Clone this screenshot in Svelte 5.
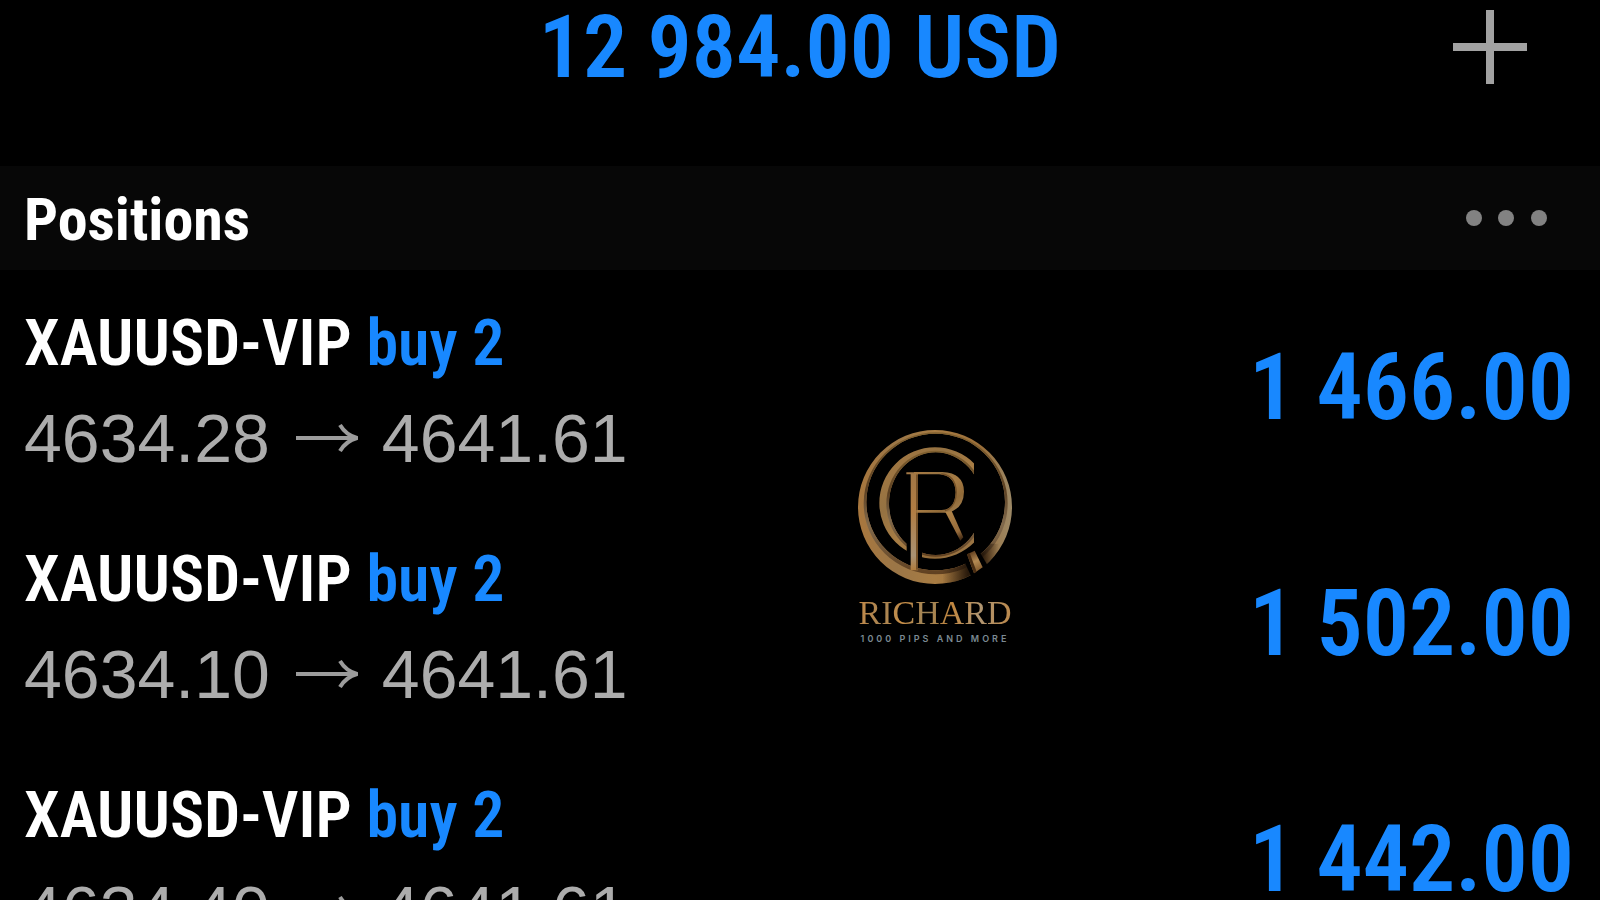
<script>
  const positions = [
    { symbol: 'XAUUSD-VIP', side: 'buy 2', open: '4634.28', current: '4641.61', profit: '1 466.00' },
    { symbol: 'XAUUSD-VIP', side: 'buy 2', open: '4634.10', current: '4641.61', profit: '1 502.00' },
    { symbol: 'XAUUSD-VIP', side: 'buy 2', open: '4634.40', current: '4641.61', profit: '1 442.00' }
  ];
</script>

<main class="screen">
  <header class="top">
    <h1>12 984.00 USD</h1>
    <button class="add" aria-label="New order">
      <svg width="76" height="76" viewBox="0 0 76 76">
        <path d="M38 1V75M1 38H75" fill="none" stroke="#a2a2a2" stroke-width="8" />
      </svg>
    </button>
  </header>

  <section class="positions">
    <div class="bar">
      <h2>Positions</h2>
      <button class="more" aria-label="Position options">
        <svg width="84" height="20" viewBox="0 0 84 20" fill="#828282">
          <circle cx="10" cy="10" r="8" />
          <circle cx="42" cy="10" r="8" />
          <circle cx="75" cy="10" r="8" />
        </svg>
      </button>
    </div>
    <ul>
      {#each positions as p}
        <li>
          <div class="detail">
            <div class="name">{p.symbol} <span>{p.side}</span></div>
            <div class="prices">
              {p.open}
              <svg width="64" height="28" viewBox="0 0 64 28" fill="none" stroke="#9c9c9c" stroke-width="4">
                <path d="M2 14H62M46 1Q52 11 63 14Q52 17 46 27" />
              </svg>
              {p.current}
            </div>
          </div>
          <div class="profit">{p.profit}</div>
        </li>
      {/each}
    </ul>
  </section>

  <aside class="brand">
    <svg width="156" height="156" viewBox="54 56 468 468" aria-hidden="true">
      <defs>
        <linearGradient id="gold" x1="0" y1="0" x2="1" y2="1">
          <stop offset="0" stop-color="#a87a42" />
          <stop offset=".3" stop-color="#957242" />
          <stop offset=".5" stop-color="#a87d45" />
          <stop offset=".75" stop-color="#916a38" />
          <stop offset="1" stop-color="#a98656" />
        </linearGradient>
        <linearGradient id="ring" gradientUnits="userSpaceOnUse" x1="57" y1="290" x2="519" y2="290">
          <stop offset="0" stop-color="#a8773e" />
          <stop offset=".25" stop-color="#9b7647" />
          <stop offset=".5" stop-color="#a87c43" />
          <stop offset=".8" stop-color="#9a6e39" />
          <stop offset="1" stop-color="#9c8967" />
        </linearGradient>
        <linearGradient id="shade" gradientUnits="userSpaceOnUse" x1="310" y1="0" x2="480" y2="0">
          <stop offset="0" stop-color="#1c1006" stop-opacity="0" />
          <stop offset=".45" stop-color="#1c1006" stop-opacity=".9" />
          <stop offset=".7" stop-color="#1c1006" stop-opacity=".9" />
          <stop offset="1" stop-color="#1c1006" stop-opacity="0" />
        </linearGradient>
        <linearGradient id="bevel" x1="0" y1="0" x2="0" y2="1">
          <stop offset="0" stop-color="#80602f" />
          <stop offset=".4" stop-color="#5c4022" />
          <stop offset=".65" stop-color="#80694c" />
          <stop offset="1" stop-color="#604020" />
        </linearGradient>
        <linearGradient id="stem" gradientUnits="userSpaceOnUse" x1="226" y1="186" x2="226" y2="480">
          <stop offset="0" stop-color="#a17746" />
          <stop offset=".4" stop-color="#b17d43" />
          <stop offset=".85" stop-color="#a99273" />
          <stop offset="1" stop-color="#b07c3c" />
        </linearGradient>
        <linearGradient id="leg" gradientUnits="userSpaceOnUse" x1="325" y1="305" x2="370" y2="388">
          <stop offset="0" stop-color="#b08449" />
          <stop offset=".7" stop-color="#966b3b" />
          <stop offset="1" stop-color="#3a2410" />
        </linearGradient>
        <linearGradient id="tail" gradientUnits="userSpaceOnUse" x1="390" y1="425" x2="420" y2="485">
          <stop offset="0" stop-color="#5a381a" />
          <stop offset=".5" stop-color="#b48a53" />
          <stop offset="1" stop-color="#7d5529" />
        </linearGradient>
        <mask id="ring-gap" maskUnits="userSpaceOnUse" x="50" y="50" width="480" height="480">
          <path fill="#fff" d="M50 50H530V530H50Z" />
          <path fill="#000" d="M374 450L422 425L452 475L400 505Z" />
        </mask>
        <mask id="c-gap" maskUnits="userSpaceOnUse" x="50" y="50" width="480" height="480">
          <path fill="#fff" d="M50 50H405V530H50Z" />
          <path fill="#000" d="M203 380H249V460H203Z" />
        </mask>
        <clipPath id="ring-area">
          <path clip-rule="evenodd" d="M57 290A231 231 0 1 0 519 290A231 231 0 1 0 57 290ZM82 275A208 205 0 1 0 498 275A208 205 0 1 0 82 275Z" />
        </clipPath>
      </defs>

      <!-- outer ring -->
      <g mask="url(#ring-gap)" fill-rule="evenodd">
        <path fill="url(#ring)" d="M57 290A231 231 0 1 0 519 290A231 231 0 1 0 57 290ZM82 275A208 205 0 1 0 498 275A208 205 0 1 0 82 275Z" />
        <path fill="url(#bevel)" d="M74 279A216 213 0 1 0 506 279A216 213 0 1 0 74 279ZM82 275A208 205 0 1 0 498 275A208 205 0 1 0 82 275Z" />
        <path fill="url(#shade)" d="M310 400H480V525H310Z" clip-path="url(#ring-area)" />
      </g>

      <!-- open inner ring -->
      <g mask="url(#c-gap)" fill-rule="evenodd">
        <path fill="url(#gold)" d="M121 278A167 167 0 1 0 455 278A167 167 0 1 0 121 278ZM150 280A140 154 0 1 0 430 280A140 154 0 1 0 150 280Z" />
        <path fill="url(#bevel)" d="M142 280A148 159 0 1 0 438 280A148 159 0 1 0 142 280ZM150 280A140 154 0 1 0 430 280A140 154 0 1 0 150 280Z" />
      </g>

      <!-- monogram stem, bowl and leg -->
      <path fill="url(#stem)" d="M202 186H237V480H215V192H202Z" />
      <path fill="#755128" d="M231 192H237V478H231Z" />
      <path fill="url(#gold)" fill-rule="evenodd" d="M225 185H310Q375 188 375 244Q374 296 326 307H232V299H308Q348 298 350 246Q348 195 300 192H225Z" />
      <path fill="none" stroke="#755128" stroke-width="4" d="M307 191Q350 195 352 246Q350 293 318 301" />
      <path fill="url(#leg)" d="M319 305L338 302L373 381L364 391Z" />

      <!-- tail crossing the ring -->
      <path fill="url(#tail)" d="M384 432L407 421L431 471L405 489Z" />
      <path fill="#4a2e14" d="M384 432L392 428L413 484L405 489Z" />
    </svg>
    <strong>RICHARD</strong>
    <small>1000 PIPS AND MORE</small>
  </aside>
</main>

<style>
  :global(body) {
    margin: 0;
    background: #000;
  }

  .screen {
    position: relative;
    height: 100vh;
    overflow: hidden;
    background: #000;
    color: #fff;
    font-family: "Roboto Condensed", "Liberation Sans Narrow", "Liberation Sans", sans-serif;
    font-weight: 600;
  }

  h1, h2, ul {
    margin: 0;
    padding: 0;
    font-weight: 600;
  }

  button {
    display: flex;
    padding: 0;
    border: 0;
    background: none;
    cursor: pointer;
  }

  .top {
    display: grid;
    grid-template-columns: 1fr auto 1fr;
    align-items: start;
    height: 166px;
    padding: 0 72px;
    box-sizing: border-box;
  }

  h1 {
    grid-column: 2;
    color: #1888ff;
    font-size: 88px;
    line-height: 94px;
    white-space: nowrap;
  }

  .add {
    justify-self: end;
    margin-top: 9px;
  }

  .bar {
    display: flex;
    align-items: center;
    justify-content: space-between;
    height: 104px;
    padding: 0 52px 0 24px;
    background: #070707;
  }

  h2 {
    padding-top: 4px;
    font-size: 60px;
    font-weight: 700;
    line-height: 72px;
  }

  ul {
    list-style: none;
  }

  li {
    display: flex;
    align-items: center;
    justify-content: space-between;
    height: 236px;
    padding: 0 26px 0 24px;
  }

  .detail {
    padding-top: 6px;
  }

  .name {
    font-size: 64px;
    line-height: 94px;
    white-space: nowrap;
  }

  .name span,
  .profit {
    color: #1888ff;
  }

  .prices {
    display: flex;
    align-items: center;
    gap: 24px;
    color: #acacac;
    font-family: "Liberation Sans", Arial, sans-serif;
    font-size: 68px;
    font-weight: 400;
    line-height: 94px;
    white-space: nowrap;
  }

  .profit {
    font-size: 92px;
    line-height: 98px;
    white-space: nowrap;
  }

  .brand {
    position: absolute;
    top: 429px;
    left: 935px;
    display: flex;
    flex-direction: column;
    align-items: center;
    transform: translateX(-50%);
  }

  .brand strong {
    margin-top: 11px;
    background: linear-gradient(100deg, #c58b49, #a78352 18%, #c98f48 30%, #9c8358 45%, #c2873f 60%, #b09672 78%, #bd8747);
    background-clip: text;
    color: transparent;
    font: 400 34px/34px "Liberation Serif", serif;
  }

  .brand small {
    margin-top: 2px;
    color: #7b8a93;
    font: 600 9px/14px Inter, sans-serif;
    letter-spacing: 3px;
    white-space: nowrap;
  }
</style>
